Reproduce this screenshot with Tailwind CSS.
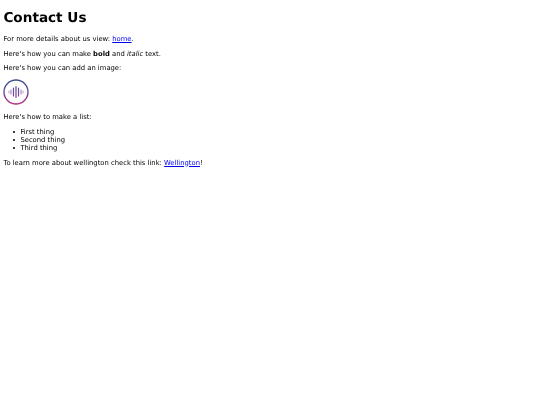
<!DOCTYPE html>
<html><head><script src="https://cdn.jsdelivr.net/npm/@tailwindcss/browser@4"></script></head>
<body class="mx-[3.4px] mt-[0.6px] mb-[3.4px] bg-white text-black font-['DejaVu_Sans',sans-serif] text-[6.8px] leading-[normal] [text-rendering:geometricPrecision]">
<div class="blur-[0.25px]">
<h1 class="text-[13.6px] font-bold my-[9.1px]">Contact Us</h1>
<p class="my-[6.8px]">For more details about us view: <a href="#" class="text-[#0000ee] underline decoration-[#0000ee]">home</a>.</p>
<p class="my-[6.8px]">Here's how you can make <b class="font-bold">bold</b> and <i>italic</i> text.</p>
<p class="my-[6.8px]">Here's how you can add an image:</p>
<p class="mt-[6.3px] mb-[5.8px]"><svg class="inline align-baseline" width="26" height="26" viewBox="0 0 26 26" fill="none">
<defs><linearGradient id="g" gradientUnits="userSpaceOnUse" x1="0" y1="0" x2="0" y2="26"><stop offset="0" stop-color="#34558f"/><stop offset="0.5" stop-color="#6d4a9c"/><stop offset="1" stop-color="#c0337f"/></linearGradient></defs>
<circle cx="13" cy="13" r="12" stroke="url(#g)" stroke-width="1.4"/>
<g stroke="url(#g)" stroke-linecap="round" stroke-width="1.2">
<path opacity=".45" d="M6 12v2M20 12v2"/>
<path opacity=".65" d="M8 11v4M18 11v4"/>
<path d="M10.5 9v8M13 7.5v11M15.5 9v8"/>
</g>
</svg></p>
<p class="mt-[5.8px] mb-[6.8px]">Here's how to make a list:</p>
<ul class="pl-[17px] my-[6.8px]">
<li class="relative before:absolute before:left-[-7.4px] before:top-[3px] before:size-[2px] before:rounded-full before:bg-black">First thing</li>
<li class="relative before:absolute before:left-[-7.4px] before:top-[3px] before:size-[2px] before:rounded-full before:bg-black">Second thing</li>
<li class="relative before:absolute before:left-[-7.4px] before:top-[3px] before:size-[2px] before:rounded-full before:bg-black">Third thing</li></ul>
<p class="my-[6.8px]">To learn more about wellington check this link: <a href="#" class="text-[#0000ee] underline decoration-[#0000ee]">Wellington</a>!</p>
</div>
</body></html>
